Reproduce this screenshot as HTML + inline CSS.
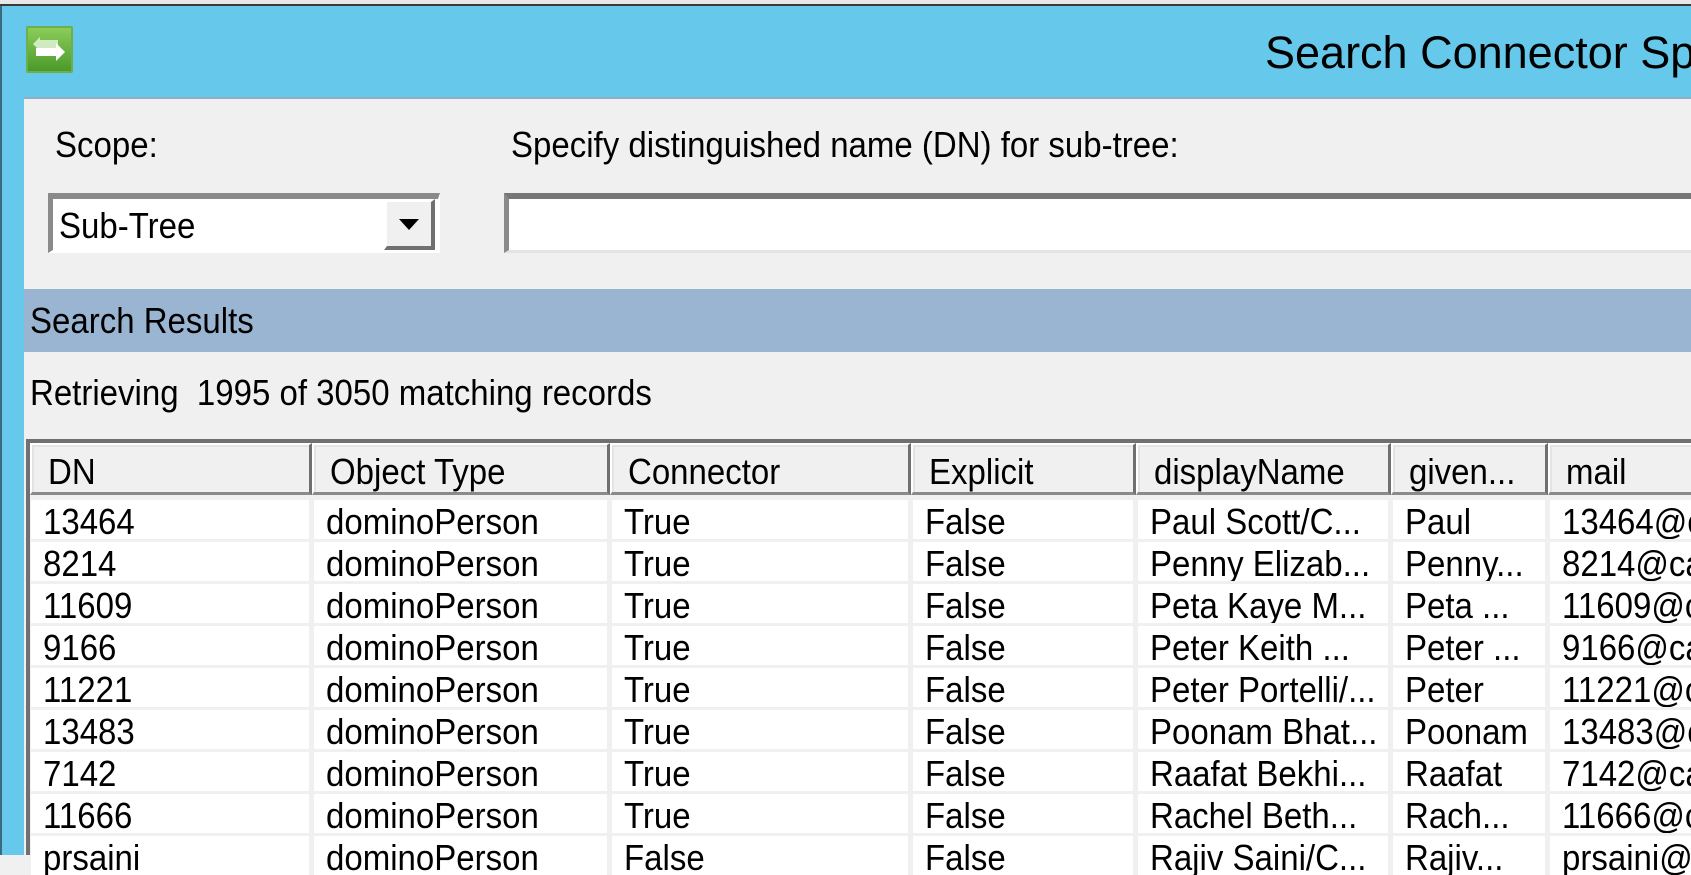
<!DOCTYPE html>
<html><head><meta charset="utf-8"><style>
*{margin:0;padding:0;box-sizing:border-box}
html,body{width:1691px;height:855px;overflow:hidden;background:#f0f0f0;font-family:"Liberation Sans",sans-serif;color:#000}
.abs{position:absolute}
.t{font-size:33px;white-space:nowrap;line-height:1;transform:scaleY(1.1);transform-origin:left top}
.hdr{position:absolute;top:443px;height:52px;background:#f0f0f0;border-top:2px solid #fff;border-left:2px solid #fff;border-right:3px solid #707070;border-bottom:3px solid #8a8a8a;box-shadow:inset 2px 2px 0 #e3e3e3;overflow:hidden}
.hdr span{position:absolute;left:16px;top:8px;font-size:33px;white-space:nowrap;line-height:1;transform:scaleY(1.1);transform-origin:left top}
.cell{position:absolute;height:39px;background:#fff;overflow:hidden}
.cell span{position:absolute;left:12px;top:3px;font-size:33px;white-space:nowrap;line-height:1;transform:scaleY(1.1);transform-origin:left top}
</style></head><body>
<div class="abs" style="left:0;top:0;width:1691px;height:4px;background:#e8e8e8"></div>
<div class="abs" style="left:0;top:4px;width:1691px;height:2px;background:#3a3a3a"></div>
<div class="abs" style="left:0;top:6px;width:1691px;height:849px;background:#66c8ea"></div>
<div class="abs" style="left:0;top:6px;width:2px;height:849px;background:#3a6a80"></div>
<div class="abs" style="left:26px;top:26px;width:47px;height:47px;background:linear-gradient(#8ccc5a,#4a9a2a);border:2px solid #6bb04a;border-radius:2px">
<svg width="43" height="43" viewBox="0 0 43 43"><path d="M5 16 L12 9 L12 12 L30 12 L30 20 L12 20 L12 23 Z" fill="#eaf6e0" opacity=".8"/><path d="M8 20 L28 20 L28 15 L37 24 L28 33 L28 28 L8 28 Z" fill="#fff"/></svg></div>
<div class="abs" style="left:1260px;top:20px;width:431px;height:70px;overflow:hidden"><div class="abs" style="left:5px;top:10px;font-size:45px;white-space:nowrap;line-height:1">Search Connector Space</div></div>
<div class="abs" style="left:24px;top:97px;width:1667px;height:758px;background:#f0f0f0;border-top:2px solid #8fb0c4"></div>
<div class="abs t" style="left:55px;top:126px">Scope:</div>
<div class="abs t" style="left:511px;top:126px">Specify distinguished name (DN) for sub-tree:</div>
<div class="abs" style="left:48px;top:193px;width:392px;height:60px;background:#fff;border-top:6px solid #8a8a8a;border-left:5px solid #8a8a8a;border-right:2px solid #fff;border-bottom:3px solid #fff"></div>
<div class="abs t" style="left:59px;top:207px">Sub-Tree</div>
<div class="abs" style="left:384px;top:199px;width:51px;height:51px;background:#f0f0f0;border-top:3px solid #fff;border-left:3px solid #fff;border-right:4px solid #707070;border-bottom:4px solid #707070"></div>
<div class="abs" style="left:399px;top:219px;width:0;height:0;border-left:10px solid transparent;border-right:10px solid transparent;border-top:11px solid #000"></div>
<div class="abs" style="left:504px;top:193px;width:1187px;height:60px;background:#fff;border-top:6px solid #777;border-left:5px solid #8a8a8a;border-bottom:3px solid #e3e3e3"></div>
<div class="abs" style="left:24px;top:289px;width:1667px;height:63px;background:#9ab5d2"></div>
<div class="abs t" style="left:30px;top:302px">Search Results</div>
<div class="abs t" style="left:30px;top:374px">Retrieving&nbsp; 1995 of 3050 matching records</div>
<div class="abs" style="left:26px;top:439px;width:1665px;height:416px;background:#f0f0f0;border-top:4px solid #707070;border-left:4px solid #707070"></div>
<div class="hdr" style="left:30px;width:282px"><span>DN</span></div>
<div class="hdr" style="left:312px;width:298px"><span>Object Type</span></div>
<div class="hdr" style="left:610px;width:301px"><span>Connector</span></div>
<div class="hdr" style="left:911px;width:225px"><span>Explicit</span></div>
<div class="hdr" style="left:1136px;width:255px"><span>displayName</span></div>
<div class="hdr" style="left:1391px;width:157px"><span>given...</span></div>
<div class="hdr" style="left:1548px;width:143px;border-right:none"><span>mail</span></div>
<div id="rows"></div>
<script>
var cols=[[31,278],[314,293],[612,296],[913,220],[1138,250],[1393,152],[1550,141]];
var data=[["13464","dominoPerson","True","False","Paul Scott/C...","Paul","13464@ca"],
["8214","dominoPerson","True","False","Penny Elizab...","Penny...","8214@ca"],
["11609","dominoPerson","True","False","Peta Kaye M...","Peta ...","11609@ca"],
["9166","dominoPerson","True","False","Peter Keith ...","Peter ...","9166@ca"],
["11221","dominoPerson","True","False","Peter Portelli/...","Peter","11221@ca"],
["13483","dominoPerson","True","False","Poonam Bhat...","Poonam","13483@ca"],
["7142","dominoPerson","True","False","Raafat Bekhi...","Raafat","7142@ca"],
["11666","dominoPerson","True","False","Rachel Beth...","Rach...","11666@ca"],
["prsaini","dominoPerson","False","False","Rajiv Saini/C...","Rajiv...","prsaini@ca"]];
var h="";
for(var r=0;r<data.length;r++){var y=500+r*42;for(var c=0;c<7;c++){h+='<div class="cell" style="left:'+cols[c][0]+'px;top:'+y+'px;width:'+cols[c][1]+'px"><span>'+data[r][c]+'</span></div>';}}
document.getElementById("rows").innerHTML=h;
</script>
</body></html>
